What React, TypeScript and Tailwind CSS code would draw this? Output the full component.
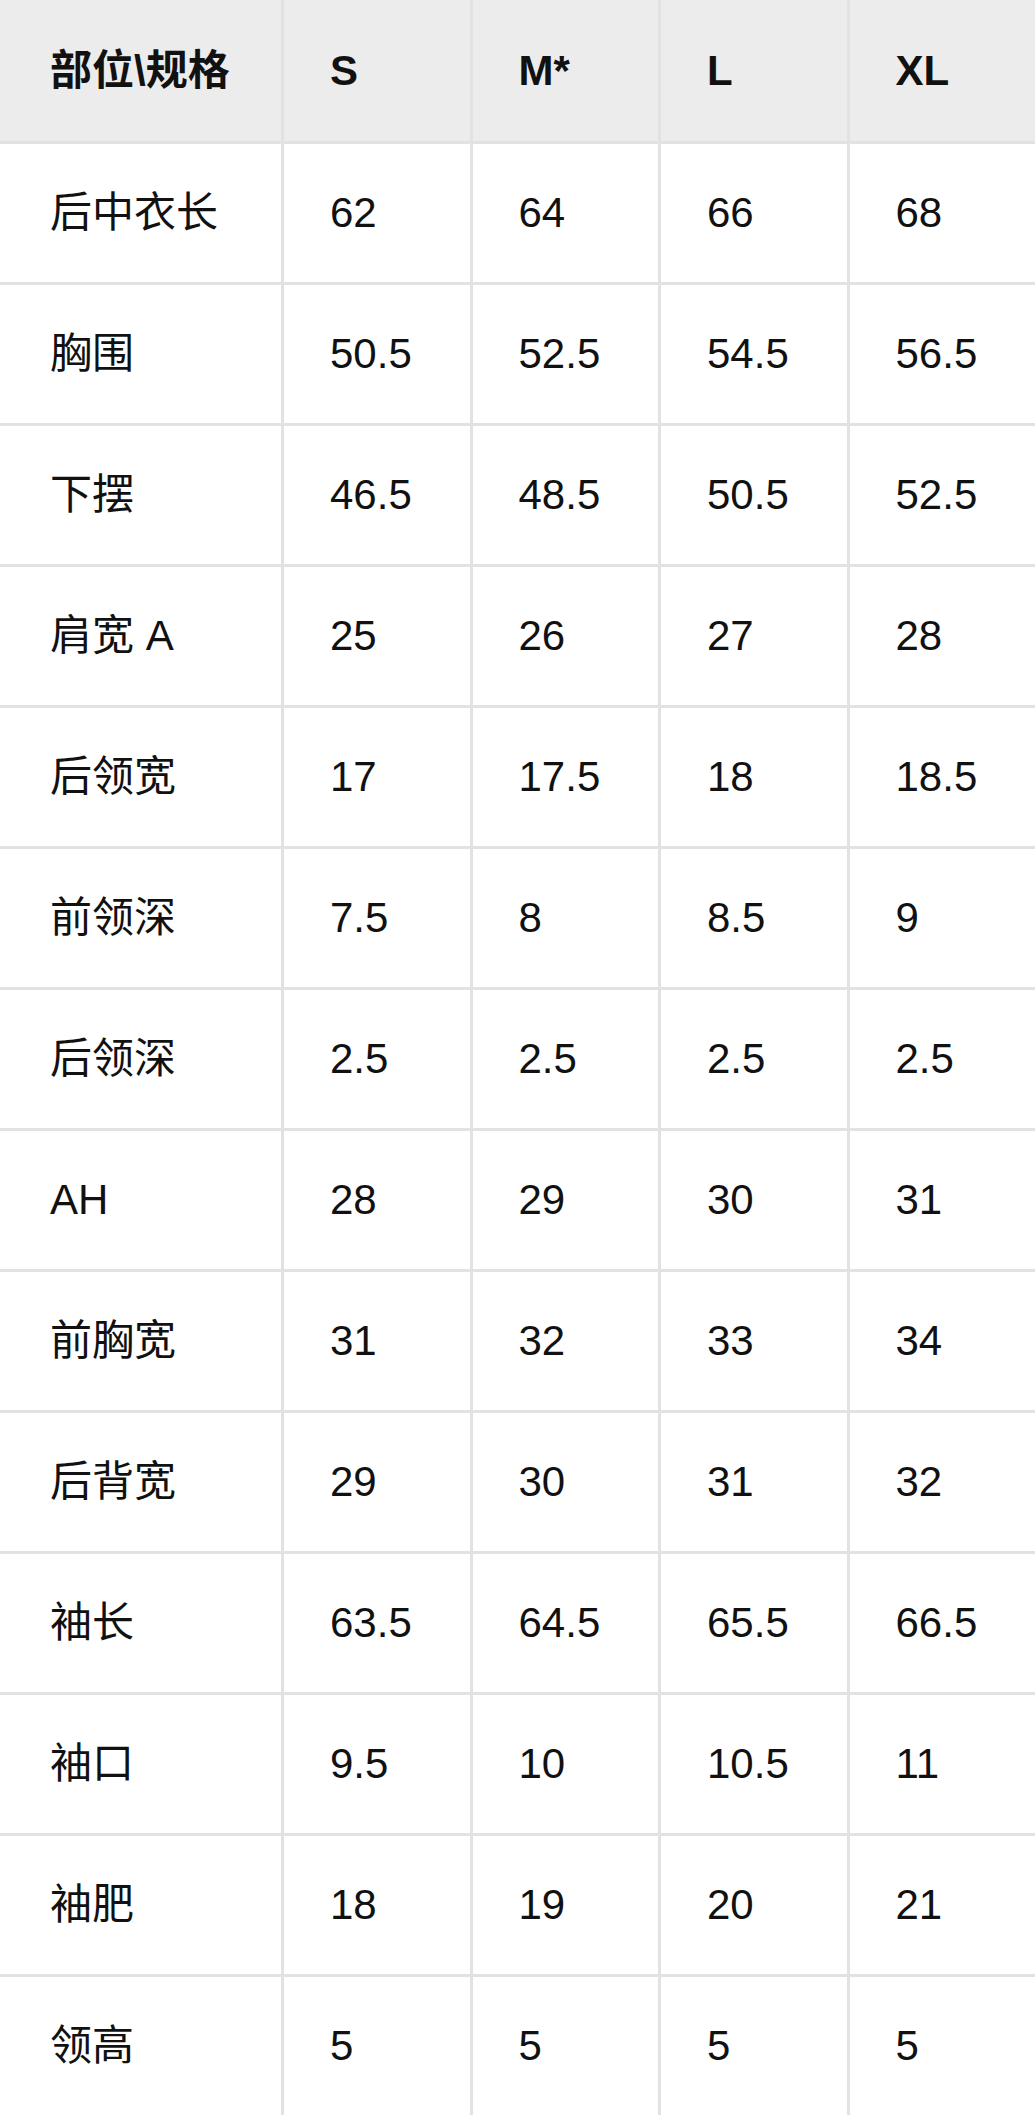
import React from "react";

const header = ["部位\\规格", "S", "M*", "L", "XL"];
const rows: string[][] = [
  ["后中衣长", "62", "64", "66", "68"],
  ["胸围", "50.5", "52.5", "54.5", "56.5"],
  ["下摆", "46.5", "48.5", "50.5", "52.5"],
  ["肩宽 A", "25", "26", "27", "28"],
  ["后领宽", "17", "17.5", "18", "18.5"],
  ["前领深", "7.5", "8", "8.5", "9"],
  ["后领深", "2.5", "2.5", "2.5", "2.5"],
  ["AH", "28", "29", "30", "31"],
  ["前胸宽", "31", "32", "33", "34"],
  ["后背宽", "29", "30", "31", "32"],
  ["袖长", "63.5", "64.5", "65.5", "66.5"],
  ["袖口", "9.5", "10", "10.5", "11"],
  ["袖肥", "18", "19", "20", "21"],
  ["领高", "5", "5", "5", "5"],
];

function Row({ cells, head }: { cells: string[]; head?: boolean }) {
  return (
    <div
      className={
        "grid grid-cols-[281px_repeat(4,minmax(0,1fr))] h-[141px] " +
        (head ? "bg-[#ececec] font-bold" : "bg-white border-t-[3px] border-[#e2e2e2]")
      }
    >
      {cells.map((c, i) => (
        <div
          key={i}
          className={
            "flex items-center " +
            (i === 0 ? "pl-[50px]" : "pl-[46px] border-l-[3px] border-[#e2e2e2]")
          }
        >
          {c}
        </div>
      ))}
    </div>
  );
}

export default function App() {
  return (
    <div
      className="w-[1035px] text-[42px] text-[#111] leading-none"
      style={{ fontFamily: '"Liberation Sans", "Noto Sans CJK SC", sans-serif' }}
    >
      <Row cells={header} head />
      {rows.map((r, i) => (
        <Row key={i} cells={r} />
      ))}
    </div>
  );
}
